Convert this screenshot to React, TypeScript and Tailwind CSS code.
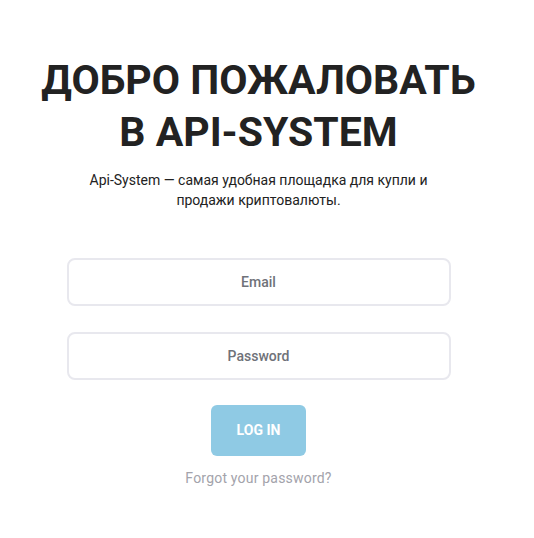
import * as React from 'react';

export default function App() {
  return (
    <div className="min-h-[538px] w-full bg-white" style={{ fontFamily: 'Roboto, "Noto Sans", sans-serif' }}>
      <div className="flex w-[517px] flex-col items-center pt-[54px]">
        <h1 className="text-center text-[41px] font-bold uppercase leading-[52px] text-[#222222]">
          Добро пожаловать
          <br />в Api-System
        </h1>
        <p className="mt-[12px] w-[350px] text-center text-[14px] leading-[20px] text-[#222222]">
          Api-System — самая удобная площадка для купли и продажи криптовалюты.
        </p>

        <form className="mt-[48px] flex w-[384px] flex-col items-center" onSubmit={(e) => e.preventDefault()}>
          <input
            type="email"
            placeholder="Email"
            className="h-[48px] w-full rounded-[8px] border-2 border-[#e8e8ee] bg-white text-center text-[14px] font-medium text-[#333] outline-none placeholder:text-[#6f7279]"
          />
          <input
            type="password"
            placeholder="Password"
            className="mt-[26px] h-[48px] w-full rounded-[8px] border-2 border-[#e8e8ee] bg-white text-center text-[14px] font-medium text-[#333] outline-none placeholder:text-[#6f7279]"
          />
          <button
            type="submit"
            className="mt-[25px] h-[51px] w-[95px] rounded-[6px] bg-[#8fcae4] text-[14px] font-bold uppercase text-white"
          >
            Log in
          </button>
          <a href="#" className="mt-[12px] text-[14px] tracking-[0.2px] text-[#a3a3ab]">
            Forgot your password?
          </a>
        </form>
      </div>
    </div>
  );
}
